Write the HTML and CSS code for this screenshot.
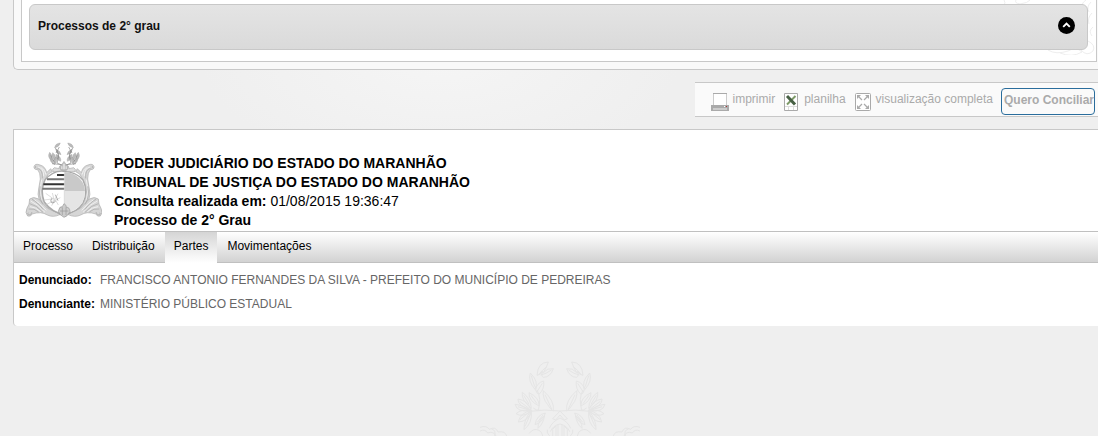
FILE: index.html
```html
<!DOCTYPE html>
<html lang="pt-BR">
<head>
<meta charset="utf-8">
<title>Consulta de Processos</title>
<link rel="stylesheet" href="styles.css">
</head>
<body>
<section class="results">
  <div class="results-inner">
    <svg class="corner-mark" viewBox="0 0 96 55" aria-hidden="true">
      <path d="M4 0q2 3 0 5M16 0q-2 3 4 4q8-1 10-4M86 0q-6 4-3 9q4 6-1 11q-3 3 2 6q6 3 1 8q-4 4 3 7q8 4 5 10q-6 6-12-1M91 2q-5 5-2 10M92 13q-5 5-3 11M93 27q-5 4-1 9M48 50q8 5 20 1q8-5 14 1q-10 6-22 1M88 38q-10 1-12 7M84 30l-6 6M82 21l-8 3"/>
    </svg>
    <button class="accordion" type="button">
      <span>Processos de 2° grau</span>
      <svg class="chevron" viewBox="0 0 18 18" aria-hidden="true"><circle cx="9" cy="9" r="9"/><path d="M5.500 10.500L9 7l3.500 3.500"/></svg>
    </button>
  </div>
</section>

<div class="toolbar">
  <a class="tool" href="#imprimir">
    <svg class="icon" viewBox="0 0 18 18" shape-rendering="crispEdges" aria-hidden="true"><path fill="#fff" d="M2 0h14v12H2z"/><path fill="#ccc" d="M2 0h1v12H2zM15 0h1v12h-1z"/><path fill="#aaa" d="M0 12h18v6H0zM2 0h14v1H2z"/><path fill="#ccc" d="M2 15h14v2H2z"/><path fill="#fff" d="M13 13h1v1h-1z"/><path fill="#a33" d="M15 13h1v1h-1z"/></svg>
    <span>imprimir</span></a>
  <a class="tool" href="#planilha">
    <svg class="icon sheet" viewBox="0 0 14 18" aria-hidden="true"><path fill="#fff" stroke="#aaa" d="M.5.5h13v17H.5z"/><path stroke="#ddd" d="M1 13.500h12M4.500 13v4M9.500 13v4"/><path stroke="#7d9a68" stroke-width="2" d="M11.500 3L3 11.500"/><path stroke="#476044" stroke-width="3" d="M3 3l8 8.500"/></svg>
    <span>planilha</span></a>
  <a class="tool" href="#completa">
    <svg class="icon full" viewBox="0 0 16 18" aria-hidden="true"><rect x=".5" y=".5" width="15" height="17" rx="1" fill="#fff" stroke="#aaa"/><path fill="#aaa" d="M2 2h4L2 6zM14 2h-4l4 4zM2 16h4l-4-4zM14 16h-4l4-4z"/><path stroke="#aaa" stroke-width="1.200" d="M3 3l4 4M13 3L9 7M3 15l4-4M13 15l-4-4"/></svg>
    <span>visualização completa</span></a>
  <button class="settle" type="button">Quero Conciliar</button>
</div>

<main class="panel">
  <header class="heading">
    <svg class="crest" viewBox="45 48 231 231" aria-hidden="true">
      <defs><g id="scroll">
        <path fill="#d6d6d6" stroke="#aaa" stroke-width="2" d="M105 164L115 147L127 140L122 131L110 143Q106 124 90 120Q75 114 72 125Q71 134 83 134Q91 142 91 162L86 192Q82 208 87 222L95 240L151 270V262L111 245Q90 215 98 180Z"/>
        <path fill="#d6d6d6" stroke="#aaa" stroke-width="2" d="M86 222Q70 213 59 222Q59 239 51 250Q44 263 53 273Q63 276 66 267Q94 258 112 270Q130 279 151 268L113 250Z"/>
        <path fill="none" stroke="#f0f0f0" stroke-width="3" d="M84 126Q102 130 101 154M92 127Q107 136 108 149M95 164Q86 195 94 224M62 228Q83 237 105 262M73 224Q88 232 109 256M60 245Q77 246 92 260"/>
        <path fill="none" stroke="#a4a4a4" stroke-width="2" d="M82 130Q99 133 97 160M91 184Q84 212 98 238M59 236Q80 240 99 262M56 252Q73 249 86 261M66 223Q80 229 100 254M78 123q-6 4 1 6M55 263q-5 5 2 7q8-1 9-9"/>
        <path fill="#bbb" stroke="#999" d="M151 54q-15 1-17 14q13-1 17-14zM137 73q13 3 16 16q-14-2-16-16zM119 82q-8 14 5 24q6-14-5-24zM128 83q12 8 7 22q-13-9-7-22zM121 99q-3 13 13 19q1-13-13-19zM138 96q7 11-5 23q-8-13 5-23zM138 88q17 8 14 21q-15-4-14-21z"/>
        <path fill="none" stroke="#888" stroke-width="2" d="M135 68q17 17 6 46l18 8M139 79q11 10 3 24M122 91l12 22M138 84l10-18M126 116l30 3"/>
        <path fill="#ddd" stroke="#aaa" stroke-width="2" d="M160 119q-13 0-13 12l-14-3q-8 4-4 12l31 2z"/>
      </g></defs>
      <use href="#scroll"/><use href="#scroll" transform="matrix(-1 0 0 1 324 0)"/>
      <path fill="#fff" stroke="#aaa" stroke-width="4" d="M162 139Q130 135 105 165Q90 197 103 231Q126 263 162 268Q202 262 218 235Q236 202 219 165Q198 140 162 139Z"/>
      <path fill="#c9c9c9" d="M164 141q32 1 53 29q8 13 8 28h-61z"/><path fill="#e5e5e5" d="M164 198h61q0 20-8 36q-20 26-53 31z"/>
      <path fill="#333" d="M141 147h22v6h-22zM100 175h63v6h-63z"/>
      <path fill="#777" d="M111 160h52v6h-52zM97 188h66v6H97z"/>
      <path fill="none" stroke="#ccc" stroke-width="2" d="M163 140v126M107 205l24 17M127 204l6 22M103 225l30-4M109 239l22-12M144 206l-15 27M151 218l-20 10M125 242l8-15M145 240l-8-14"/>
      <path fill="none" stroke="#888" stroke-width="2" d="M136 209l8 18M125 220q-6 9 1 14q9 0 11-7"/>
      <path fill="#bbb" stroke="#999" d="M162 109l-12 17q-2 11 12 12q13-1 12-12z"/><path fill="#eee" d="M160 116h4v17h-4zM154 124h3v8h-3zM167 124h3v8h-3z"/>
      <path fill="#ccc" stroke="#999" stroke-width="2" d="M145 259q3-16 12-14l5-9q8 4 7 11q10-1 11 13q-9 16-18 17q-14-7-17-18z"/><path fill="none" stroke="#999" stroke-width="2" d="M157 247v23M168 247v23M150 258h25"/>
    </svg>
    <div class="court">
      <strong>PODER JUDICIÁRIO DO ESTADO DO MARANHÃO</strong>
      <strong>TRIBUNAL DE JUSTIÇA DO ESTADO DO MARANHÃO</strong>
      <span><strong>Consulta realizada em:</strong> 01/08/2015 19:36:47</span>
      <strong>Processo de 2° Grau</strong>
    </div>
  </header>
  <nav class="tabs">
    <a href="#processo">Processo</a>
    <a href="#distribuicao">Distribuição</a>
    <a class="active" href="#partes" aria-current="page">Partes</a>
    <a href="#movimentacoes">Movimentações</a>
  </nav>
  <dl class="parties">
    <dt>Denunciado:</dt><dd>FRANCISCO ANTONIO FERNANDES DA SILVA - PREFEITO DO MUNICÍPIO DE PEDREIRAS</dd>
    <dt>Denunciante:</dt><dd>MINISTÉRIO PÚBLICO ESTADUAL</dd>
  </dl>
</main>

<footer class="footer">
  <svg class="watermark" viewBox="0 0 480 258" aria-hidden="true">
    <defs><g id="branch"><path d="M205 36Q173 37 171 76Q181 75 188 64Q182 77 190 82Q211 82 220 56Q202 53 190 68Q201 50 205 36zM176 74Q187 60 200 50M182 75Q198 72 214 60M151 69Q143 93 165 118Q178 96 151 69zM154 77l10 33M191 93Q169 99 167 120Q171 134 178 132Q194 117 191 93zM187 100l-16 25M190 122Q187 145 203 164Q210 177 220 183Q225 153 190 122zM195 134l20 43M147 128Q146 153 177 168Q179 143 147 128zM153 136l18 25M127 127Q123 150 154 175Q152 144 127 127zM131 136l16 27M114 147Q112 168 153 180Q143 151 114 147zM105 163Q112 188 151 182Q132 166 105 163zM108 191Q127 204 154 183Q126 175 108 191zM115 216Q145 215 155 181Q120 188 115 216zM132 239Q158 220 154 182Q131 207 132 239zM196 189Q170 195 165 224Q188 219 196 189zM193 198Q174 211 174 235Q190 221 193 198zM119 154l29 22M114 170l30 9M120 209l29-24M135 229l16-36M172 217l17-22"/><path d="M151 184Q193 177 240 183L218 206l9 4l13-15M160 174q8 8 22 7M171 120q14 26 4 60M0 232q19-7 28 6q19-10 26 8q22-4 26 12M0 243q15-7 23 6q17-7 25 9M34 236q15 5 10 22M148 250q12-17 29-9q9 4 11 17M202 239q-3 10 7 19M208 235q8-20 32-31M211 245q7-18 29-23M218 258v-20l10-10v30M234 223v35"/></g></defs>
    <use href="#branch"/><use href="#branch" transform="matrix(-1 0 0 1 480 0)"/>
  </svg>
</footer>
</body>
</html>
```
FILE: styles.css
```css
* { box-sizing: border-box; }
body {
  margin: 0;
  padding-left: 13px;
  background: radial-gradient(ellipse 240px 110px at 440px 60px, #f5f5f5, #efefef);
  color: #000;
  font: 12px/16px "Liberation Sans", Arial, sans-serif;
  overflow-x: hidden;
}
a { color: inherit; text-decoration: none; }
button { font: inherit; cursor: pointer; }

.results {
  padding: 0 1px 7px 7px;
  border: 1px solid #c8c8c8;
  border-width: 0 0 1px 1px;
  border-radius: 0 0 0 5px;
  background: #f9f9f9;
}
.results-inner {
  position: relative;
  padding: 4px 8px 11px 7px;
  border: 1px solid #c8c8c8;
  border-top: 0;
  background: #fff;
}
.corner-mark {
  position: absolute;
  top: 0;
  right: 0;
  width: 96px;
  fill: none;
  stroke: #eee;
}
.accordion {
  position: relative;
  display: flex;
  align-items: center;
  justify-content: space-between;
  width: 100%;
  height: 46px;
  padding: 0 12px 3px 8px;
  border: 1px solid #c8c8c8;
  border-radius: 6px;
  background: linear-gradient(#e4e4e4, #dadada);
  color: #111;
  font-weight: bold;
}
.chevron { width: 17px; height: 17px; }
.chevron path { fill: none; stroke: #fff; stroke-width: 2; }

.toolbar {
  display: flex;
  gap: 9px;
  width: fit-content;
  margin: 12px 0 12px auto;
  padding: 5px 3px 1px 16px;
  border: 1px solid #c8c8c8;
  border-width: 1px 0;
  background: #fafafa;
  color: #aaa;
}
.tool { display: flex; gap: 4px; padding-top: 3px; }
.icon { width: 18px; height: 18px; margin-top: 2px; fill: none; }
.sheet { width: 14px; margin-right: 2px; }
.full { width: 16px; margin-right: 1px; }
.settle {
  height: 27px;
  padding: 0 0 3px 2px;
  margin-left: -1px;
  border: 1px solid #2a6d9c;
  border-radius: 4px;
  background: transparent;
  color: #aaa;
  font-weight: bold;
}

.panel {
  border: 1px solid #c8c8c8;
  border-width: 1px 0 0 1px;
  border-radius: 0 0 0 4px;
  background: #fff;
}
.heading {
  display: flex;
  gap: 12px;
  min-height: 101px;
  padding: 11px 11px 0;
}
.crest { flex: none; width: 77px; height: 77px; }
.court {
  display: flex;
  flex-direction: column;
  padding-top: 13px;
  font-size: 14px;
  line-height: 19px;
}
.tabs {
  display: flex;
  gap: 1px;
  height: 32px;
  border: 1px solid #c0c0c0;
  border-width: 1px 0;
  background: linear-gradient(#fff, #d2d2d2);
}
.tabs a { padding: 6px 9px 9px; }
.tabs .active {
  margin-bottom: -1px;
  background: linear-gradient(#d5d5d5, #fff);
}
.parties {
  display: grid;
  grid-template-columns: 77px 1fr;
  gap: 8px 4px;
  margin: 0;
  padding: 9px 5px 14px;
}
.parties dt { font-weight: bold; }
.parties dd { margin: 0; color: #666; }

.footer {
  display: flex;
  justify-content: center;
  padding-top: 24px;
  padding-left: 9px;
}
.watermark {
  width: 160px;
  height: 86px;
  fill: none;
  stroke: #e5e5e5;
  stroke-width: 3;
}
```
